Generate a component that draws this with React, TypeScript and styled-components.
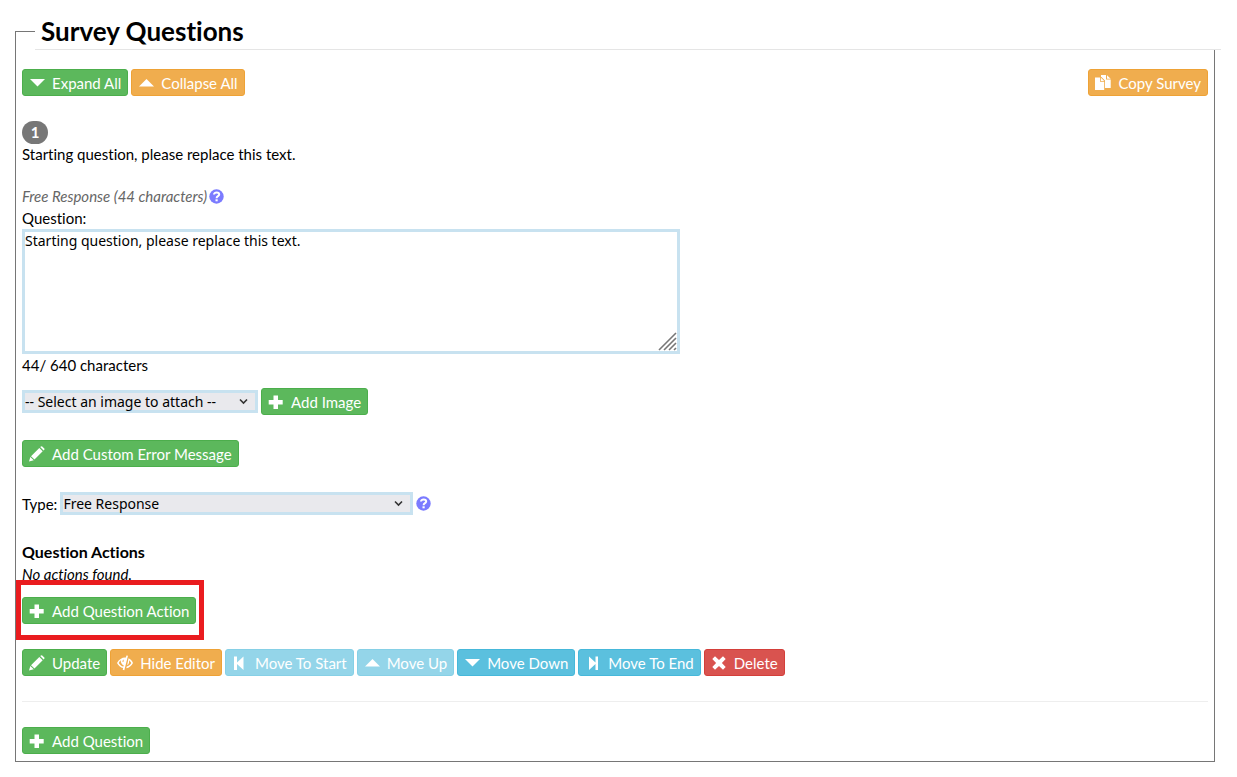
import React from "react";
import styled, { createGlobalStyle } from "styled-components";

const GlobalStyle = createGlobalStyle`
  *, *::before, *::after { box-sizing: border-box; }
  body {
    margin: 0;
    background: #fff;
    color: #000;
    font-family: Lato, "Liberation Sans", sans-serif;
    font-size: 15px;
    font-variant-ligatures: none;
    line-height: 22px;
  }
`;

const tones = {
  success: { bg: "#5cb85c", edge: "#4cae4c" },
  warning: { bg: "#f0ad4e", edge: "#eea236" },
  info: { bg: "#5bc0de", edge: "#46b8da" },
  danger: { bg: "#d9534f", edge: "#d43f3a" },
};
type Tone = keyof typeof tones;

const Page = styled.main`
  padding: 12px 22px 15px 15px;
`;

const Fieldset = styled.fieldset`
  min-width: 0;
  margin: 0;
  padding: 0 6px 7px;
  border: 1px solid #767676;
`;

const Legend = styled.legend`
  width: 100%;
  margin: 0 0 19px 13px;
  padding: 2px 6px 0;
  border-bottom: 1px solid #e5e5e5;
  font-size: 26px;
  font-weight: 700;
  line-height: 35px;
`;

const Toolbar = styled.div`
  display: flex;
  justify-content: space-between;
  margin-bottom: 25px;
`;

const ButtonGroup = styled.div`
  display: flex;
  flex-wrap: wrap;
  gap: 3px;
`;

const Button = styled.button<{ $tone: Tone }>`
  display: inline-flex;
  align-items: center;
  gap: 7px;
  height: 27px;
  padding: 1px 6px 0;
  border: 1px solid ${(p) => tones[p.$tone].edge};
  border-radius: 3px;
  background: ${(p) => tones[p.$tone].bg};
  color: #fff;
  font-family: inherit;
  font-size: 15px;
  font-variant-ligatures: none;
  line-height: 22px;
  white-space: nowrap;
  cursor: pointer;
  &:disabled { opacity: 0.65; cursor: not-allowed; }
`;

const Glyph = styled.svg`
  flex: none;
  width: 16px;
  height: 16px;
  fill: currentColor;
`;

const Badge = styled.span`
  display: block;
  width: 26px;
  border-radius: 12px;
  background: #777;
  color: #fff;
  font-weight: 700;
  line-height: 23px;
  text-align: center;
`;

const Text = styled.p`
  margin: 0 0 21px;
  line-height: 20px;
`;

const Hint = styled.div`
  display: flex;
  align-items: center;
  gap: 2px;
  color: #666;
  font-style: italic;
`;

const HelpButton = styled.button`
  display: flex;
  padding: 0;
  border: 0;
  background: none;
  cursor: help;
`;

const Label = styled.label`
  display: block;
  line-height: 22px;
`;

const TextBox = styled.div`
  position: relative;
  width: 658px;
  max-width: 100%;
`;

const TextArea = styled.textarea`
  display: block;
  width: 100%;
  height: 125px;
  padding: 0;
  border: 3px solid #c8e2f0;
  outline: 0;
  resize: none;
  background: #fff;
  color: #000;
  font-family: "Noto Sans", sans-serif;
  font-size: 14px;
  line-height: 17px;
`;

const Grip = styled.svg`
  position: absolute;
  right: 3px;
  bottom: 3px;
  width: 19px;
  height: 19px;
  stroke: #777;
  stroke-width: 1.6;
  pointer-events: none;
`;

const Counter = styled.p`
  margin: 0 0 12px;
`;

const Row = styled.div<{ $gap: number }>`
  display: flex;
  align-items: center;
  gap: 3px;
  margin-bottom: ${(p) => p.$gap}px;
`;

const SelectBox = styled.div<{ $width: number }>`
  position: relative;
  width: ${(p) => p.$width}px;
`;

const Select = styled.select`
  display: block;
  width: 100%;
  height: 23px;
  padding: 0 3px;
  border: 0;
  border-radius: 0;
  box-shadow: inset 0 0 0 3px #c8e2f0;
  appearance: none;
  background: #e9e9ed;
  color: #000;
  font-family: "Noto Sans", sans-serif;
  font-size: 14px;
  line-height: 22px;
`;

const Chevron = styled.svg`
  position: absolute;
  top: 8px;
  right: 10px;
  width: 9px;
  height: 7px;
  fill: none;
  stroke: #333;
  stroke-width: 1.6;
  pointer-events: none;
`;

const Heading = styled.h3`
  margin: 0;
  font-size: 16px;
  font-weight: 700;
`;

const Empty = styled.p`
  margin: 0 0 12px;
  font-style: italic;
`;

const Highlighted = styled.div`
  position: relative;
  display: flex;
  width: max-content;
  margin-bottom: 25px;
  &::after {
    content: "";
    position: absolute;
    inset: -17px -8px -16px -6px;
    border: 5px solid #ea1c1f;
    pointer-events: none;
  }
`;

const Divider = styled.hr`
  margin: 25px 0;
  border: 0;
  border-top: 1px solid #eee;
`;

const shapes = {
  down: <path d="M1 4h15l-7.5 7.5z" />,
  up: <path d="M1 11.5h15L8.500 4z" />,
  plus: <path d="M5.500 1.500h4.500v4.500h4.700v4.500H10V15H5.500v-4.500H.7V6h4.800z" />,
  pencil: (
    <path d="M0 15.500 1.300 11 4.800 14.300zM2 10.200 10.300 1.900 13.700 5.300 5.500 13.600zM11.200 1.100 12 .4Q12.600-.1 13.200.4L15.300 2.500Q15.800 3.100 15.300 3.700L14.600 4.400z" />
  ),
  copy: (
    <>
      <path d="M0 2.500h5v4.300h4.200V15H0z" />
      <path d="M5.800 2.500 9.200 6H5.800z" />
      <path d="M6 0h5v4.500h4.700v8.500H10V5.500L6.500 2H6z" />
      <path d="M12 .2 15.700 3.700H12z" />
    </>
  ),
  eye: (
    <>
      <path d="M9.400.4 11 .8 7.300 15.200 5.700 14.800 6.100 13.100C3.500 12.500 1.400 10.500 0 7.900 2 4.400 5 2.500 8 2.500L8.900 2.600zM3.700 5.300C2.900 6 2.200 6.900 1.700 7.900 2.800 9.800 4.400 11.100 6.500 11.600L6.800 10.500C5 9.900 3.600 7.700 3.700 5.300zM6.700 4.500C5.700 5 5.300 6 5.600 7L6.600 6.800z" fillRule="evenodd" />
      <path d="M11.500 3.300C13.400 4.200 15 5.800 16 7.900 14.500 10.900 12.100 12.700 9.300 13.200L9.700 11.500C11.700 11 13.300 9.700 14.300 7.900 13.700 6.800 12.900 5.900 12 5.200 12.500 7.400 11.700 9.300 10.200 10.200z" />
    </>
  ),
  start: <path d="M2 1.500h3v6L11.500 1.500v13.500L5 9v6H2z" />,
  end: <path d="M4 1.500 10.500 7.500v-6H13v13.500h-2.500V9L4 15z" />,
  remove: (
    <path d="M4 1.300 8 5.100 12 1.300 14.700 4 10.900 8 14.700 12 12 14.700 8 10.900 4 14.700 1.300 12 5.100 8 1.300 4z" />
  ),
};

type ActionProps = {
  tone: Tone;
  icon: keyof typeof shapes;
  disabled?: boolean;
  children: React.ReactNode;
};

function Action({ tone, icon, disabled, children }: ActionProps) {
  return (
    <Button type="button" $tone={tone} disabled={disabled}>
      <Glyph viewBox="0 0 16 16" aria-hidden="true">{shapes[icon]}</Glyph>
      {children}
    </Button>
  );
}

function Help() {
  return (
    <HelpButton type="button" aria-label="Help">
      <svg width="15" height="15" viewBox="0 0 15 15" aria-hidden="true">
        <circle cx="7.500" cy="7.500" r="7.200" fill="#7b7bff" />
        <path d="M5 5.600C5 2.600 10.200 2.700 10.200 5.600 10.200 7.300 7.600 7.100 7.600 9.200" fill="none" stroke="#fff" strokeWidth="2" />
        <path d="M6.500 10.300h2.200v2H6.500z" fill="#fff" />
      </svg>
    </HelpButton>
  );
}

type DropDownProps = { id: string; width: number; value: string; label?: string };

function DropDown({ id, width, value, label }: DropDownProps) {
  return (
    <SelectBox $width={width}>
      <Select id={id} aria-label={label} defaultValue={value}>
        <option>{value}</option>
      </Select>
      <Chevron viewBox="0 0 9 7" aria-hidden="true">
        <path d="M1 1.500 4.500 5 8 1.500" />
      </Chevron>
    </SelectBox>
  );
}

export default function App() {
  return (
    <Page>
      <GlobalStyle />
      <Fieldset>
        <Legend>Survey Questions</Legend>
        <Toolbar>
          <ButtonGroup>
            <Action tone="success" icon="down">Expand All</Action>
            <Action tone="warning" icon="up">Collapse All</Action>
          </ButtonGroup>
          <Action tone="warning" icon="copy">Copy Survey</Action>
        </Toolbar>

        <Badge>1</Badge>
        <Text>Starting question, please replace this text.</Text>

        <Hint>
          <span>Free Response (44 characters)</span>
          <Help />
        </Hint>
        <Label htmlFor="question">Question:</Label>
        <TextBox>
          <TextArea id="question" defaultValue="Starting question, please replace this text." />
          <Grip viewBox="0 0 19 19" aria-hidden="true">
            <path d="M1 18 18 1M6 18 18 6M11 18l7-7M16 18l2-2" />
          </Grip>
        </TextBox>
        <Counter>44/ 640 characters</Counter>

        <Row $gap={25}>
          <DropDown id="image" width={236} value="-- Select an image to attach --" label="Image" />
          <Action tone="success" icon="plus">Add Image</Action>
        </Row>
        <Row $gap={25}>
          <Action tone="success" icon="pencil">Add Custom Error Message</Action>
        </Row>
        <Row $gap={26}>
          <Label htmlFor="type">Type:</Label>
          <DropDown id="type" width={353} value="Free Response" />
          <Help />
        </Row>

        <Heading>Question Actions</Heading>
        <Empty>No actions found.</Empty>
        <Highlighted>
          <Action tone="success" icon="plus">Add Question Action</Action>
        </Highlighted>

        <ButtonGroup>
          <Action tone="success" icon="pencil">Update</Action>
          <Action tone="warning" icon="eye">Hide Editor</Action>
          <Action tone="info" icon="start" disabled>Move To Start</Action>
          <Action tone="info" icon="up" disabled>Move Up</Action>
          <Action tone="info" icon="down">Move Down</Action>
          <Action tone="info" icon="end">Move To End</Action>
          <Action tone="danger" icon="remove">Delete</Action>
        </ButtonGroup>
        <Divider />
        <Action tone="success" icon="plus">Add Question</Action>
      </Fieldset>
    </Page>
  );
}
